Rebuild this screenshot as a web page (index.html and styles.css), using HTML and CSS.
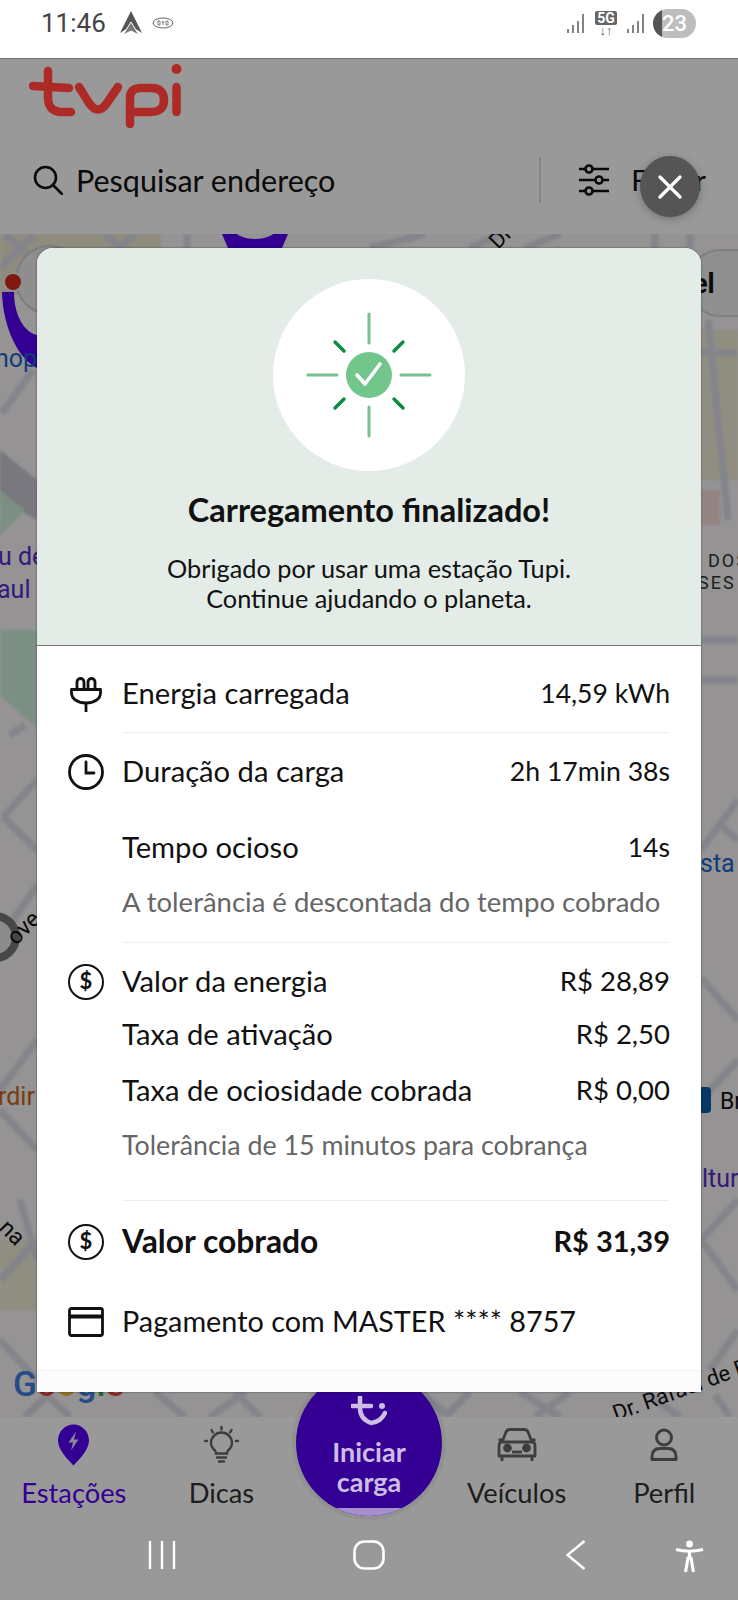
FILE: index.html
```html
<!DOCTYPE html>
<html lang="pt-BR">
<head>
  <meta charset="UTF-8" />
  <meta name="viewport" content="width=device-width, initial-scale=1.0"/>
  <title>Tupi - Carregamento finalizado</title>
  <link rel="stylesheet" href="styles.css">
</head>
<body>
<div class="app">

  <div class="statusbar">
    <div class="status-left">
      <span class="clock">11:46</span>
      <svg class="nav-arrow" viewBox="0 0 24 24"><path d="M12 0 L23 22 L12 15 L1 22 Z" fill="#555"/><path d="M12 11 L20 24 L12 20 L4 24 Z" fill="#777" stroke="#fff" stroke-width="1"/></svg>
      <svg class="byd" viewBox="0 0 22 12"><ellipse cx="11" cy="6" rx="10" ry="5" fill="none" stroke="#666" stroke-width="1"/><path d="M6 4h2v4h-2zM10 4l1 2 1-2M11 6v2M14 4h2v4h-2z" fill="none" stroke="#666" stroke-width=".8"/></svg>
    </div>
    <div class="status-right">
      <svg class="signal" viewBox="0 0 18 20"><path d="M1 20v-4M6 20v-8M11 20v-12M16 20V1" stroke="#777" stroke-width="1.8" fill="none"/></svg>
      <div class="net"><span class="net-label">5G</span><span class="net-arrows">↓↑</span></div>
      <svg class="signal" viewBox="0 0 18 20"><path d="M1 20v-4M6 20v-8M11 20v-12M16 20V1" stroke="#777" stroke-width="1.8" fill="none"/></svg>
      <div class="battery"><span>23</span></div>
    </div>
  </div>

  <header class="topbar">
    <svg class="logo" viewBox="0 0 160 68">
      <g fill="none" stroke="#ad2a26" stroke-width="8.5" stroke-linecap="round" stroke-linejoin="round">
        <path d="M19 9V35Q19 50 33 50H42"/>
        <path d="M4 24L40 26"/>
        <path d="M50 25L60 41Q69 54 78 41L89 25"/>
        <path d="M101 62V36Q101 26 112 26H122Q135 26 135 38Q135 50 122 50H103"/>
        <path d="M147.500 25V50"/>
      </g>
      <circle cx="147.500" cy="7" r="5" fill="#ad2a26"/>
    </svg>
    <div class="searchbar">
      <svg class="search-icon" viewBox="0 0 30 30"><circle cx="12.500" cy="12.500" r="10.500" fill="none" stroke="#111" stroke-width="2.600"/><path d="M20 20l9 9" stroke="#111" stroke-width="2.600" stroke-linecap="round"/></svg>
      <span class="search-text">Pesquisar endereço</span>
      <div class="search-sep"></div>
      <svg class="filter-icon" viewBox="0 0 30 32"><g stroke="#111" stroke-width="2.600" fill="none"><path d="M0 5h30M0 16h30M0 27h30"/><circle cx="10" cy="5" r="3.500" fill="#fff"/><circle cx="20" cy="16" r="3.500" fill="#fff"/><circle cx="10" cy="27" r="3.500" fill="#fff"/></g></svg>
      <span class="search-text filter-text">Filtrar</span>
    </div>
  </header>

  <div class="map">
    <svg class="map-canvas" viewBox="0 234 738 1183">
      <g class="map-ground">
        <rect x="0" y="234" width="160" height="60" fill="#efe8d0"/>
        <rect x="695" y="330" width="43" height="150" fill="#f0ecd8"/>
        <rect x="0" y="1240" width="37" height="70" fill="#f0ecd8"/>
        <rect x="700" y="490" width="20" height="35" fill="#f6dcd8"/>
        <path d="M0 450L37 480V520L0 500Z" fill="#c8c8d2"/>
        <path d="M0 490L25 510L0 535Z" fill="#cdeedb"/>
        <path d="M0 630H37V728L0 695Z" fill="#cdeedb"/>
        <g fill="none" stroke="#dcdce8" stroke-width="7">
          <path d="M5 234L35 262M35 234L0 268M105 234L135 262M135 234L105 262M187 234V248"/>
          <path d="M370 248L425 234M470 248L500 234M525 248L560 234M655 234V248M690 234V248"/>
          <path d="M2 413L33 370M3 817L37 780M3 817L37 850M37 885L10 925M10 735L25 725"/>
          <path d="M37 1040L0 1090M0 1110L37 1150M37 1240L0 1280M20 1200L37 1260M0 1340L37 1380"/>
          <path d="M708 320L728 520M701 353H738M701 640H738M701 680H738M738 800L701 850M738 840L720 825"/>
          <path d="M701 978L738 1020M738 1060L701 1100M738 1200L701 1240L738 1290M738 1330L710 1370M715 1395L730 1417"/>
          <path d="M25 1417L47 1395M47 1395L70 1417M155 1392L185 1417M245 1392L210 1417M235 1392L260 1417M420 1392L450 1417M470 1392L445 1417M520 1392L560 1417M570 1392L535 1417"/>
          <path d="M645 1392L680 1417"/>
        </g>
      </g>
      <path d="M222 234H288L282 248H228Z" fill="#5700f5"/>
      <ellipse cx="255" cy="229" rx="21" ry="10" fill="#f5f5f5"/>
      <circle cx="50" cy="280" r="34" fill="#ededed" stroke="#d0d0d0" stroke-width="2"/>
      <path d="M2 292C3 330 20 360 37 368V335C24 332 14 315 14 292Z" fill="#5700f5"/>
      <circle cx="13" cy="282" r="10" fill="#eee"/>
      <circle cx="13" cy="282" r="8" fill="#d8281a"/>
      <rect x="690" y="250" width="80" height="66" rx="30" fill="#eeeeee" stroke="#d4d4d4" stroke-width="2"/>
      <circle cx="-5" cy="937" r="21" fill="#e8e8e8" stroke="#777" stroke-width="8"/>
      <text class="map-label blue" x="-5" y="367">nop</text>
      <text class="map-label violet" x="-2" y="565">u de</text>
      <text class="map-label violet" x="-3" y="598">aul</text>
      <text class="map-label road" transform="translate(16 946) rotate(-45)">ove</text>
      <text class="map-label orange" x="-2" y="1105">rdir</text>
      <text class="map-label road" transform="translate(-2 1229) rotate(45)">na</text>
      <text class="map-label road bold" x="693" y="293">el</text>
      <text class="map-label caps" x="708" y="567">DOS</text>
      <text class="map-label caps" x="698" y="589">SES</text>
      <text class="map-label blue" x="700" y="872">sta</text>
      <rect x="695" y="1087" width="16" height="26" rx="4" fill="#0d5fa8"/>
      <text class="map-label road" x="720" y="1109">Br</text>
      <text class="map-label violet" x="702" y="1187">ltur</text>
      <text class="map-label road small" transform="translate(616 1421) rotate(-20)">Dr. Rafael de Barros</text>
      <text class="map-label road small" transform="translate(498 250) rotate(-45)">Dr.</text>
      <text class="map-google" x="13" y="1396"><tspan fill="#3f7fe0">G</tspan><tspan fill="#e04a3a">o</tspan><tspan fill="#f4bc2c">o</tspan><tspan fill="#3f7fe0">g</tspan><tspan fill="#30a850">l</tspan><tspan fill="#e04a3a">e</tspan></text>
    </svg>
  </div>

  <nav class="tabbar">
    <div class="tab active">
      <svg class="tab-icon" width="31" height="41" viewBox="0 0 31 41"><path d="M15.500 0C7 0 0 7 0 16C0 25 9 34 15.500 41C22 34 31 25 31 16C31 7 24 0 15.500 0Z" fill="#5700f5"/><path d="M18 7L10.500 18H15L13 26L20.500 15H16Z" fill="#e8e0ff"/></svg>
      <span>Estações</span>
    </div>
    <div class="tab">
      <svg class="tab-icon" width="35" height="37" viewBox="0 0 35 37" fill="none" stroke="#666" stroke-width="2.400" stroke-linecap="round"><path d="M11 24C8 21.500 7 19 7 16.500A10.500 10.500 0 0 1 28 16.500C28 19 27 21.500 24 24C23 25 23 26 23 27H12C12 26 12 25 11 24Z"/><path d="M13 31H22M15 35H20"/><path d="M17.500 0.500V3M7.500 3.500L9 6M27.500 3.500L26 6M1 14.500H3M32 14.500H34"/></svg>
      <span>Dicas</span>
    </div>
    <div class="tab fab-slot">
      <div class="fab">
        <svg class="fab-logo" viewBox="0 0 36 30" fill="none" stroke="#cdbde6" stroke-width="4.500" stroke-linecap="round"><path d="M9 1V12Q9 23 20 27Q30 26 34 17"/><path d="M1 10H20"/><circle cx="31" cy="10" r="3" fill="#cdbde6" stroke="none"/></svg>
        <span>Iniciar<br>carga</span>
      </div>
    </div>
    <div class="tab">
      <svg class="tab-icon" width="40" height="34" viewBox="0 0 40 34" fill="none" stroke="#666" stroke-width="2.800" stroke-linejoin="round"><path d="M5 14L9 4Q10 1.500 13 1.500H27Q30 1.500 31 4L35 14"/><path d="M1.500 12H5M35 12H38.500"/><path d="M4 14H36Q38 15 38 18V28H2V18Q2 15 4 14Z"/><path d="M5 28V33M35 28V33"/><circle cx="10.500" cy="20" r="3" fill="#666"/><circle cx="29.500" cy="20" r="3" fill="#666"/><path d="M15 24H25"/></svg>
      <span>Veículos</span>
    </div>
    <div class="tab">
      <svg class="tab-icon" width="28" height="33" viewBox="0 0 28 33" fill="none" stroke="#666" stroke-width="3"><circle cx="14" cy="9" r="7.500"/><path d="M2 31V28Q2 20 10 20H18Q26 20 26 28V31Z" stroke-linejoin="round"/></svg>
      <span>Perfil</span>
    </div>
  </nav>

  <div class="scrim"></div>

  <div class="sysnav">
    <svg width="28" height="30" viewBox="0 0 28 30"><path d="M2 1V29M14 1V29M26 1V29" stroke="#fff" stroke-width="2.400" fill="none"/></svg>
    <svg width="32" height="30" viewBox="0 0 32 30"><rect x="1.500" y="1.500" width="29" height="27" rx="10" fill="none" stroke="#fff" stroke-width="2.600"/></svg>
    <svg width="20" height="30" viewBox="0 0 20 30"><path d="M18.500 1L1.500 15L18.500 29" stroke="#fff" stroke-width="2.400" fill="none"/></svg>
    <svg width="29" height="33" viewBox="0 0 29 33"><circle cx="14.500" cy="4" r="3.500" fill="#fff"/><path d="M1 9.500Q14.500 13 28 9.500M14.500 11V19M10.500 32L13 18H16L18.500 32" stroke="#fff" stroke-width="3.200" fill="none"/></svg>
  </div>

  <button class="close-btn" aria-label="Fechar">
    <svg width="24" height="24" viewBox="0 0 24 24"><path d="M2 2L22 22M22 2L2 22" stroke="#fff" stroke-width="3.200" stroke-linecap="round"/></svg>
  </button>

  <section class="modal">
    <div class="modal-head">
      <div class="sun">
        <svg width="192" height="192" viewBox="0 0 192 192" fill="none" stroke-linecap="round">
          <g stroke="#74c08f" stroke-width="3"><path d="M96 35V64M96 128V157M35 96H64M128 96H157"/></g>
          <g stroke="#0b8b3e" stroke-width="3.400"><path d="M62 63L71 72M130 63L121 72M62 129L71 120M130 129L121 120"/></g>
          <circle cx="96" cy="96" r="23" fill="#72c68c"/>
          <path d="M84 96L92 105L107 85" stroke="#fff" stroke-width="3.600" stroke-linejoin="round"/>
        </svg>
      </div>
      <h1 class="modal-title">Carregamento finalizado!</h1>
      <p class="modal-desc">Obrigado por usar uma estação Tupi.<br>Continue ajudando o planeta.</p>
    </div>

    <div class="modal-body">
      <div class="row first">
        <svg class="row-icon" viewBox="0 0 36 36" fill="none" stroke="#111" stroke-width="2.800" stroke-linejoin="round"><path d="M3.500 13.500H32.500V17C32.500 23 26 27 18 27C10 27 3.500 23 3.500 17Z"/><path d="M18 27V36"/><path d="M9 13.500V6A3.500 3.500 0 0 1 16 6V13.500M20 13.500V6A3.500 3.500 0 0 1 27 6V13.500"/></svg>
        <span class="label">Energia carregada</span>
        <span class="value narrow">14,59 kWh</span>
      </div>
      <div class="divider d1"></div>

      <div class="row r-duracao">
        <svg class="row-icon" viewBox="0 0 36 36" fill="none" stroke="#111" stroke-width="2.800" stroke-linecap="round"><circle cx="18" cy="18" r="16.500"/><path d="M18 8V19H26"/></svg>
        <span class="label">Duração da carga</span>
        <span class="value narrow">2h 17min 38s</span>
      </div>
      <div class="row r-ocioso">
        <span class="label indent">Tempo ocioso</span>
        <span class="value narrow">14s</span>
      </div>
      <p class="note n1">A tolerância é descontada do tempo cobrado</p>
      <div class="divider d2"></div>

      <div class="row r-valor">
        <div class="coin"><span>$</span></div>
        <span class="label">Valor da energia</span>
        <span class="value">R$ 28,89</span>
      </div>
      <div class="row r-ativacao">
        <span class="label indent">Taxa de ativação</span>
        <span class="value">R$ 2,50</span>
      </div>
      <div class="row r-ociosidade">
        <span class="label indent">Taxa de ociosidade cobrada</span>
        <span class="value">R$ 0,00</span>
      </div>
      <p class="note n2">Tolerância de 15 minutos para cobrança</p>
      <div class="divider d3"></div>

      <div class="row total">
        <div class="coin"><span>$</span></div>
        <span class="label">Valor cobrado</span>
        <span class="value">R$ 31,39</span>
      </div>
      <div class="row r-pagamento">
        <svg class="row-icon" viewBox="0 0 36 36" fill="none" stroke="#111" stroke-width="2.800" stroke-linejoin="round"><rect x="1.500" y="4.500" width="33" height="27" rx="2"/><path d="M1.500 12.500H34.500" stroke-width="4"/></svg>
        <span class="label">Pagamento com MASTER **** 8757</span>
      </div>
    </div>
    <div class="modal-foot"></div>
  </section>

</div>
</body>
</html>
```

FILE: styles.css
```css
html, body {
  margin: 0;
  padding: 0;
  background-color: #fff;
  font-family: 'Lato', 'Liberation Sans', sans-serif;
  color: #111;
}

.app {
  position: relative;
  width: 738px;
  height: 1600px;
  overflow: hidden;
  display: flex;
  flex-direction: column;
}

/* status bar */
.statusbar {
  height: 58px;
  flex-shrink: 0;
  background-color: #fff;
  display: flex;
  justify-content: space-between;
  align-items: center;
  padding: 0 42px 12px 41px;
  box-sizing: border-box;
}

.status-left, .status-right {
  display: flex;
  align-items: center;
}

.clock {
  font-family: 'Roboto', sans-serif;
  font-size: 26px;
  color: #444;
  margin-right: 13px;
}

.nav-arrow {
  width: 24px;
  height: 24px;
  margin-right: 9px;
}

.byd {
  width: 22px;
  height: 12px;
}

.signal {
  width: 18px;
  height: 20px;
}

.net {
  width: 24px;
  margin: 0 9px;
  display: flex;
  flex-direction: column;
  align-items: center;
  font-family: 'Roboto', sans-serif;
  color: #555;
}

.net-label {
  background-color: #666;
  color: #fff;
  font-size: 14px;
  font-weight: 700;
  line-height: 14px;
  padding: 0 2px;
  border-radius: 2px;
}

.net-arrows {
  font-size: 13px;
  font-weight: 700;
  line-height: 11px;
}

.battery {
  width: 43px;
  height: 29px;
  margin-left: 8px;
  border-radius: 15px;
  background: linear-gradient(90deg, #555 0 9px, #bdbdbd 9px);
  color: #fff;
  font-family: 'Roboto', sans-serif;
  font-size: 22px;
  font-weight: 500;
  line-height: 29px;
  text-align: center;
}

/* app header */
.topbar {
  height: 176px;
  flex-shrink: 0;
  background-color: #fff;
  border-top: 1px solid #bbb;
  box-sizing: border-box;
}

.logo {
  display: block;
  position: relative;
  z-index: 2;
  width: 160px;
  height: 68px;
  margin: 3px 0 0 29px;
}

.searchbar {
  height: 46px;
  margin-top: 27px;
  padding-left: 33px;
  display: flex;
  align-items: center;
  color: #111;
}

.search-icon {
  width: 30px;
  height: 30px;
  margin-right: 13px;
}

.search-text {
  font-size: 30.5px;
  white-space: nowrap;
}

.filter-text {
  font-size: 28.5px;
}

.search-sep {
  width: 2px;
  height: 46px;
  background-color: #ddd;
  margin: 0 38px 0 204px;
}

.filter-icon {
  width: 30px;
  height: 32px;
  margin-right: 22px;
}

/* map under the modal */
.map {
  height: 1183px;
  flex-shrink: 0;
  position: relative;
  background-color: #f8f5f6;
  overflow: hidden;
}

.map-canvas {
  display: block;
  width: 738px;
  height: 1183px;
}

.map-ground {
  filter: blur(1px);
}

.map-label {
  font-family: 'Roboto', sans-serif;
  font-size: 25px;
  fill: #111;
}

.map-label.blue { fill: #1a66c8; }
.map-label.violet { fill: #5a2ad0; }
.map-label.orange { fill: #c8661e; }
.map-label.road { font-size: 23px; }
.map-label.small { font-size: 22px; }
.map-label.bold { font-weight: 700; font-size: 27px; }
.map-label.caps { font-size: 18px; letter-spacing: 2px; fill: #333; }

.map-google {
  font-family: 'Roboto', sans-serif;
  font-size: 35px;
  font-weight: 500;
}

/* bottom navigation */
.tabbar {
  height: 103px;
  flex-shrink: 0;
  background-color: #fff;
  display: grid;
  grid-template-columns: repeat(5, 1fr);
}

.tab {
  display: flex;
  flex-direction: column;
  align-items: center;
  color: #333;
  font-size: 27.3px;
}

.tab .tab-icon {
  height: 42px;
  margin: 7px 0 11px;
}

.tab.active {
  color: #5700f5;
}

.tab span {
  line-height: 32px;
}

.fab-slot {
  position: static;
}

.fab {
  position: absolute;
  z-index: 2;
  left: 296px;
  top: 1370px;
  width: 146px;
  height: 146px;
  border-radius: 50%;
  background-color: #340093;
  box-shadow: 0 0 0 4px rgba(0, 0, 0, 0.05);
  overflow: hidden;
  display: flex;
  flex-direction: column;
  align-items: center;
  color: #cdbde6;
  font-size: 27px;
  font-weight: 700;
  text-align: center;
}

.fab::after {
  content: "";
  position: absolute;
  left: 0;
  right: 0;
  bottom: 0;
  height: 8px;
  background-color: #a78fd0;
}

.fab-logo {
  width: 36px;
  height: 30px;
  margin-top: 26px;
}

.fab span {
  line-height: 30px;
  margin-top: 11px;
}

.scrim {
  position: absolute;
  z-index: 1;
  left: 0;
  right: 0;
  top: 58px;
  bottom: 0;
  background-color: rgba(0, 0, 0, 0.4);
}

/* android buttons */
.sysnav {
  position: relative;
  z-index: 2;
  height: 80px;
  flex-shrink: 0;
  box-sizing: border-box;
  padding: 20px 0 0 148px;
  display: grid;
  grid-template-columns: 205px 213px 109px auto;
  align-items: start;
  justify-content: start;
}

/* modal */
.close-btn {
  position: absolute;
  z-index: 4;
  left: 640px;
  top: 156px;
  width: 60px;
  height: 61px;
  padding: 0;
  border: none;
  border-radius: 50%;
  background-color: #555;
  box-shadow: 0 2px 8px rgba(0, 0, 0, 0.25);
  display: flex;
  justify-content: center;
  align-items: center;
}

.modal {
  position: absolute;
  z-index: 3;
  left: 37px;
  top: 248px;
  width: 664px;
  height: 1144px;
  background-color: #fff;
  border-radius: 16px 16px 0 0;
  box-shadow: 0 0 2px rgba(0, 0, 0, 0.6);
  display: flex;
  flex-direction: column;
}

.modal-head {
  height: 398px;
  box-sizing: border-box;
  background-color: #e3ece6;
  border-bottom: 1px solid #777;
  border-radius: 16px 16px 0 0;
  padding-top: 31px;
  display: flex;
  flex-direction: column;
  align-items: center;
}

.sun {
  width: 192px;
  height: 192px;
  border-radius: 50%;
  background-color: #fff;
  flex-shrink: 0;
}

.modal-title {
  margin: 20px 0 0;
  font-size: 32.5px;
  font-weight: 700;
  line-height: 38px;
}

.modal-desc {
  margin: 24px 0 0;
  font-size: 25.3px;
  line-height: 30px;
  text-align: center;
}

.modal-body {
  flex: 1;
  padding: 0 31px 0 31px;
}

.row {
  display: flex;
  align-items: center;
  height: 36px;
  font-size: 29.2px;
  line-height: 34px;
}

.row-icon {
  width: 36px;
  height: 36px;
  flex-shrink: 0;
}

.coin {
  width: 36px;
  height: 36px;
  box-sizing: border-box;
  flex-shrink: 0;
  border: 2.8px solid #111;
  border-radius: 50%;
  font-size: 22px;
  font-weight: 700;
  line-height: 30px;
  text-align: center;
}

.label {
  margin: -2px 0 0 18px;
  flex: 1;
  white-space: nowrap;
}

.label.indent {
  margin-left: 54px;
}

.value {
  margin-top: -2px;
  font-size: 27.5px;
  white-space: nowrap;
}

.value.narrow {
  font-size: 26.6px;
}

.row.total {
  font-weight: 700;
  font-size: 31.8px;
  margin-top: 23px;
}

.row.total .value {
  font-size: 29px;
}

.row.first { margin-top: 30px; }
.r-duracao { margin-top: 21px; }
.r-ocioso { margin-top: 40px; }
.r-valor { margin-top: 21px; }
.r-ativacao { margin-top: 17px; }
.r-ociosidade { margin-top: 20px; }
.r-pagamento { margin-top: 44px; font-size: 28.8px; }

.note {
  margin: 18px 0 0 54px;
  height: 36px;
  color: #666;
  line-height: 36px;
  white-space: nowrap;
}

.n1 { font-size: 27.5px; }
.n2 { font-size: 26.8px; }

.divider {
  height: 1px;
  margin: 0 1px 0 54px;
  background-color: #eee;
}

.d1 { margin-top: 20px; }
.d2 { margin-top: 22px; }
.d3 { margin-top: 37px; }

.modal-foot {
  height: 21px;
  flex-shrink: 0;
  background-color: #fcfcfc;
  border-top: 1px solid #f2f2f2;
}
```
